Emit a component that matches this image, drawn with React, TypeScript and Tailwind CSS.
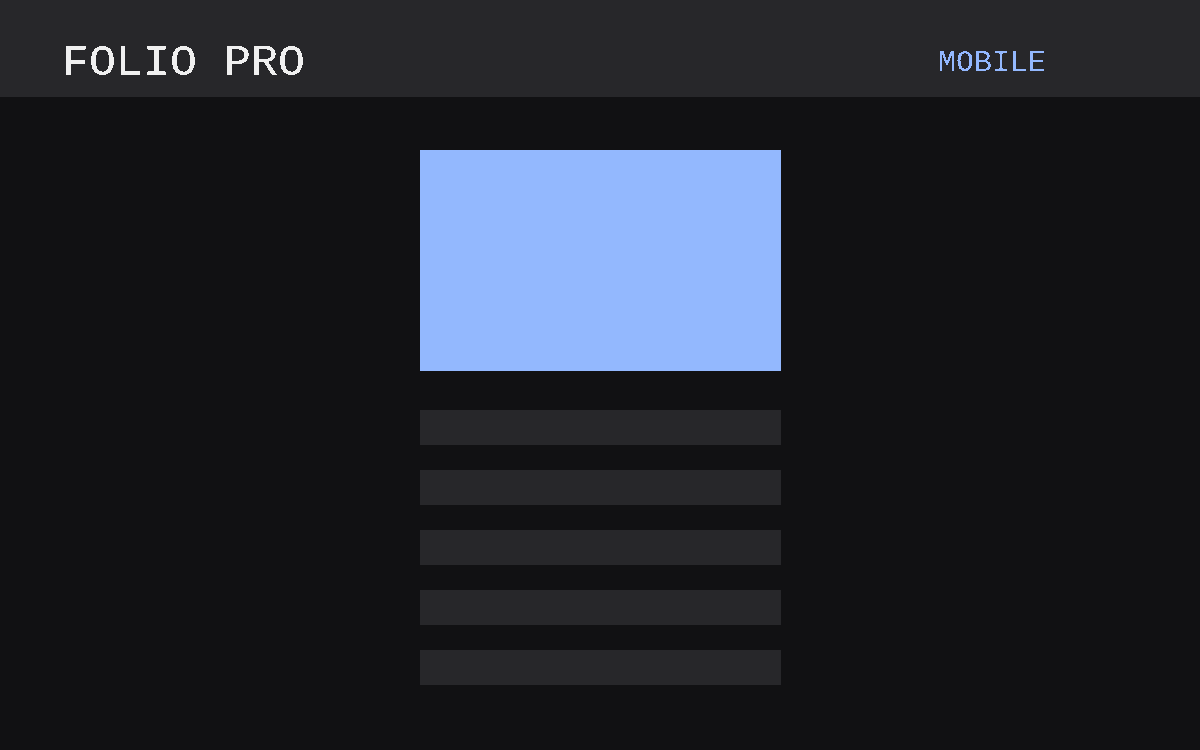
// crisp, aliased text like the reference
const PixelFilter = () => (
  <svg width="0" height="0" className="absolute">
    <filter id="pixel-text">
      <feComponentTransfer>
        <feFuncA type="discrete" tableValues="0 1" />
      </feComponentTransfer>
    </filter>
  </svg>
);

export default function App() {
  const rows = [0, 1, 2, 3, 4];
  return (
    <div className="min-h-[750px] w-full bg-[#111113] font-['Liberation_Mono',monospace]">
      <PixelFilter />
      <header className="flex h-[97px] items-center justify-between bg-[#27272a] pt-[29px] pl-[62px] pr-[154px]">
        <h1 className="text-[45px] leading-none font-normal text-[#f0f0f0] [filter:url(#pixel-text)]">
          FOLIO PRO
        </h1>
        <span className="text-[30px] leading-none text-[#93b8fe] [filter:url(#pixel-text)]">MOBILE</span>
      </header>
      <main className="mx-auto flex w-[361px] flex-col pt-[53px]">
        <div className="h-[221px] bg-[#93b8fe]" />
        <div className="mt-[39px] flex flex-col gap-[25px]">
          {rows.map((r) => (
            <div key={r} className="h-[35px] bg-[#27272a]" />
          ))}
        </div>
      </main>
    </div>
  );
}
